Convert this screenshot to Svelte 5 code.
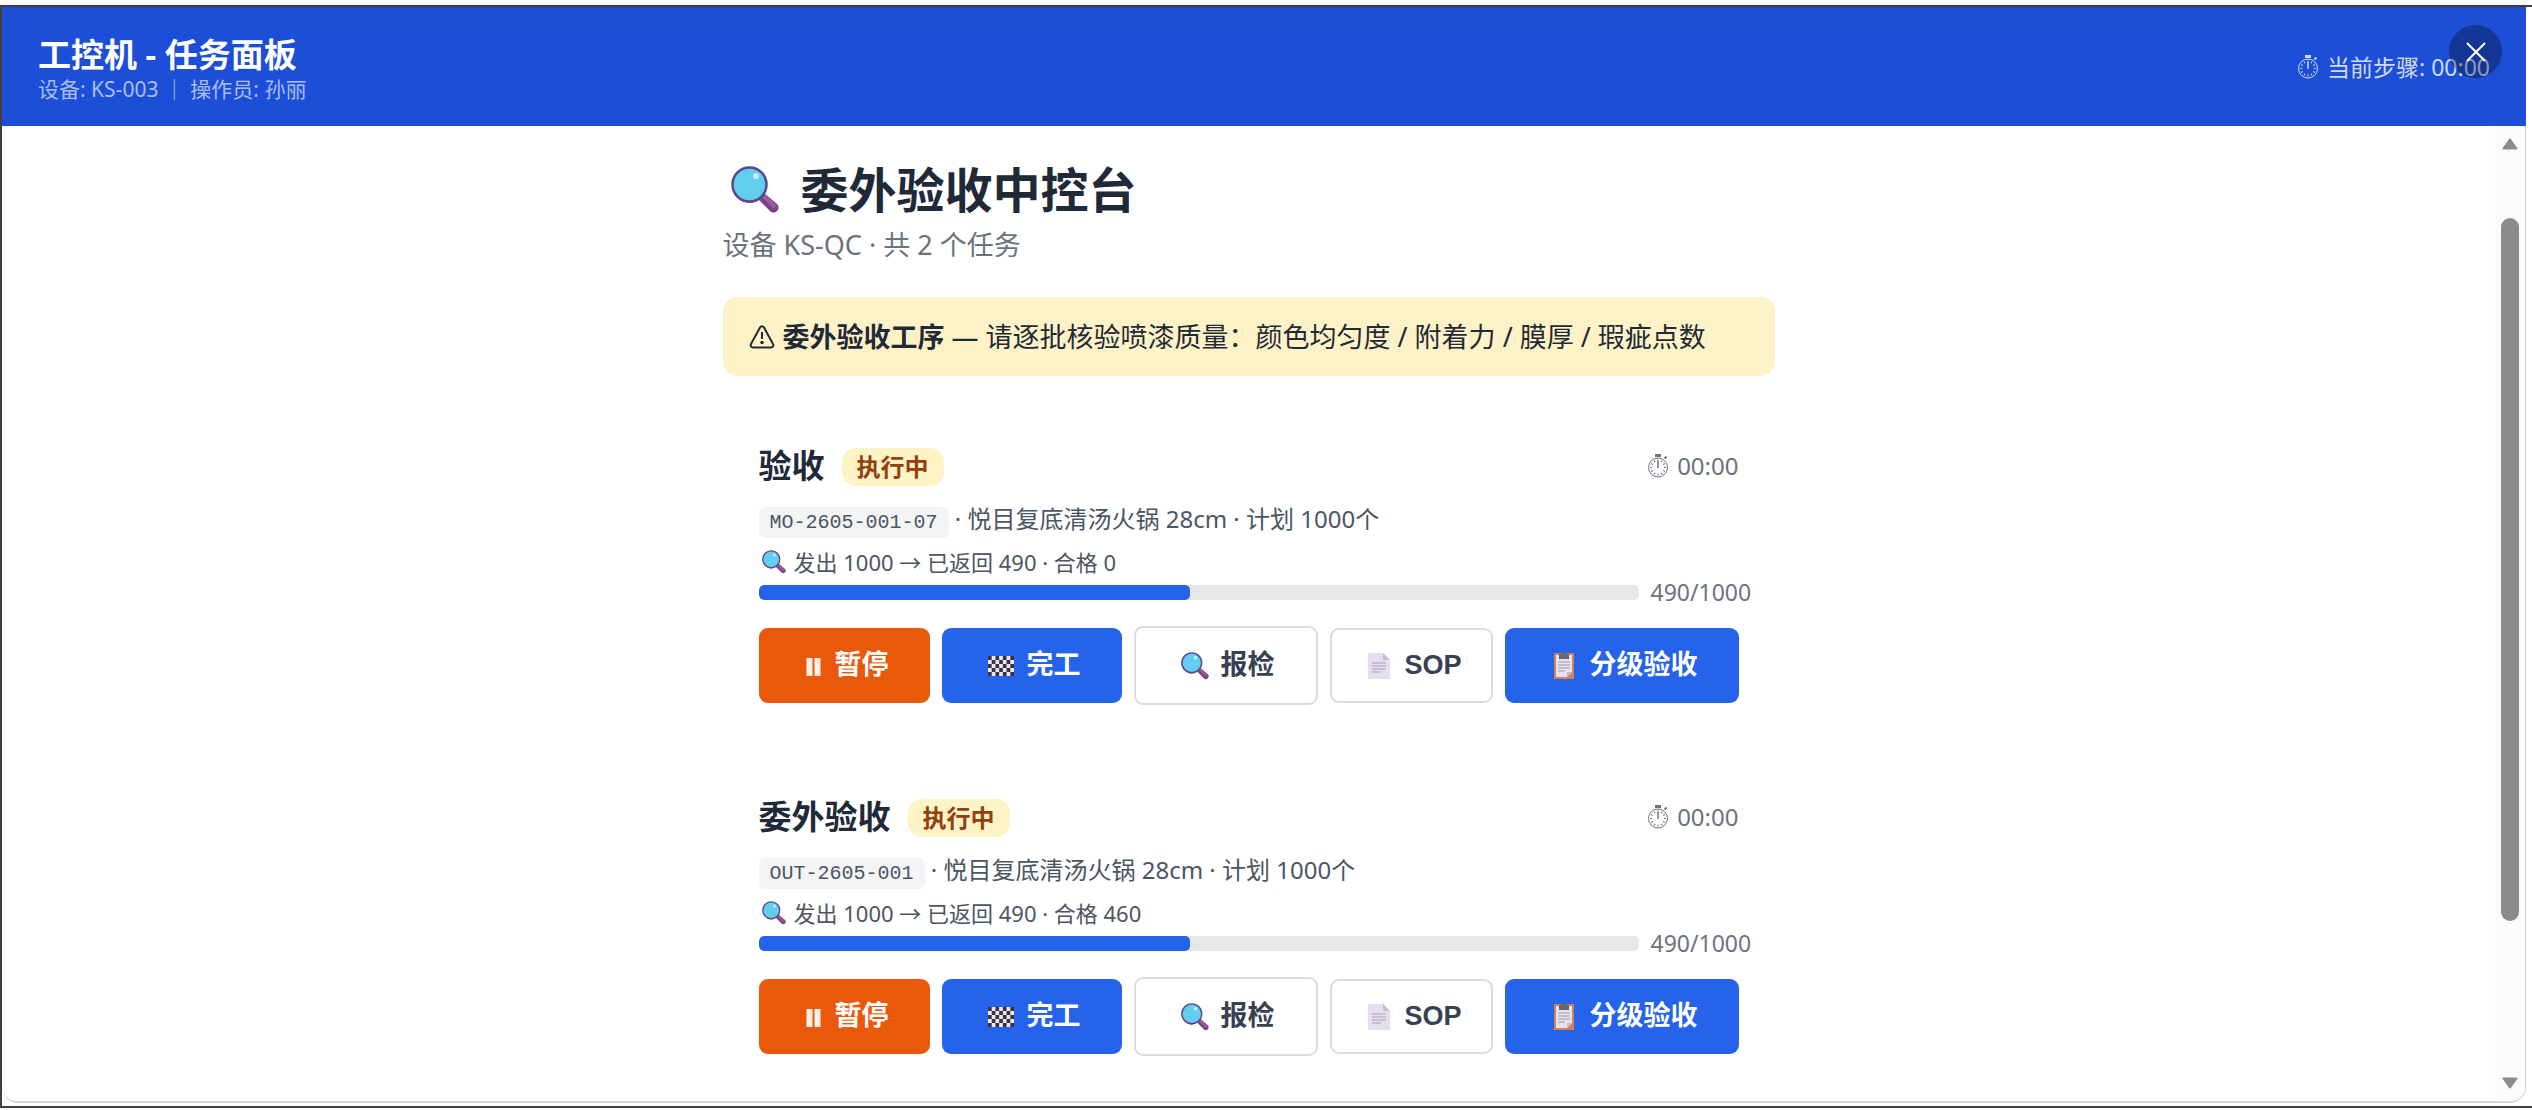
<script>
  const tasks = [
    {
      name: "验收",
      order: "MO-2605-001-07",
      product: "悦目复底清汤火锅 28cm",
      plan: 1000,
      sent: 1000,
      returned: 490,
      passed: 0,
    },
    {
      name: "委外验收",
      order: "OUT-2605-001",
      product: "悦目复底清汤火锅 28cm",
      plan: 1000,
      sent: 1000,
      returned: 490,
      passed: 460,
    },
  ];

  const checks = ["颜色均匀度", "附着力", "膜厚", "瑕疵点数"];
  const ticks = Array.from({ length: 12 }, (_, i) => i * 30);

  // checkered flag cells, 7 x 5
  const cells = Array.from({ length: 35 }, (_, i) => ({ x: i % 7, y: Math.floor(i / 7) }));
</script>

{#snippet magnifier()}
  <svg class="icon" viewBox="0 0 48 48" aria-hidden="true">
    <path d="M28 31l5-4 13 11c2 2 2 5 0 7s-5 2-7 0L28 34z" fill="#7d4484" />
    <path d="M34 31l9 9" stroke="#9a5a9c" stroke-width="4" stroke-linecap="round" />
    <circle cx="18.500" cy="18.500" r="17" fill="#62cdec" stroke="#56478c" stroke-width="2.500" />
    <path d="M5 29a17 17 0 0 0 21 5" fill="none" stroke="#76407c" stroke-width="2" />
    <circle cx="25" cy="10" r="3" fill="#c3f0fb" />
  </svg>
{/snippet}

{#snippet stopwatch()}
  <svg class="watch" viewBox="0 0 22 24" aria-hidden="true">
    <rect x="8" y="0" width="6" height="3" fill="currentColor" />
    <path d="M17.500 4.500l2-2" stroke="currentColor" stroke-width="2" />
    <circle cx="11" cy="13.500" r="9.500" fill="none" stroke="currentColor" />
    {#each ticks as a}
      <path d="M11 5.500v2" stroke="currentColor" transform="rotate({a} 11 13.5)" />
    {/each}
    <path d="M11 7v7" stroke="currentColor" stroke-width="1.500" />
  </svg>
{/snippet}

{#snippet page()}
  <svg class="icon" viewBox="0 0 28 28" aria-hidden="true">
    <path d="M3 1h15l7 7v19H3z" fill="#e6def0" />
    <path d="M18 1l7 7h-7z" fill="#c6bcd0" />
    <path d="M7 11h14M7 14h14M7 17h14M7 20h9" stroke="#a9a0b2" stroke-width="1" />
  </svg>
{/snippet}

{#snippet clipboard()}
  <svg class="icon" viewBox="0 0 28 28" aria-hidden="true">
    <path d="M4 1h20v26H4z" fill="#cf8450" />
    <path d="M6 3h16v17l-5 5H6z" fill="#e9e0f2" />
    <path d="M22 20l-5 5v-5z" fill="#c5b6d2" />
    <path d="M9 3c0-2 2-1 3-2h4c1 1 3 0 3 2v4H9z" fill="#6b6570" />
    <path d="M8 10h12M8 13h12M8 16h12M8 19h7" stroke="#a196ab" />
  </svg>
{/snippet}

<div class="screen">
  <div class="dialog">
    <header class="topbar">
      <div class="title">
        <h1>工控机 - 任务面板</h1>
        <p class="device">设备: KS-003 ｜ 操作员: 孙丽</p>
      </div>
      <div class="step">{@render stopwatch()}<span>当前步骤: 00:00</span></div>
      <button class="close" aria-label="关闭">
        <svg viewBox="0 0 20 20" aria-hidden="true"><path d="M1 1l18 18M19 1L1 19" stroke="#fff" stroke-width="2" /></svg>
      </button>
    </header>

    <div class="body">
      <main>
        <h2>{@render magnifier()}<span>委外验收中控台</span></h2>
        <p class="summary">设备 KS-QC · 共 {tasks.length} 个任务</p>

        <div class="notice">
          <svg viewBox="0 0 26 26" aria-hidden="true">
            <path d="M11 3.500a2.300 2.300 0 0 1 4 0l9 16.500a2.300 2.300 0 0 1-2 3.500H4a2.300 2.300 0 0 1-2-3.500z" fill="none" stroke="currentColor" stroke-width="2" />
            <path d="M13 8v7" stroke="currentColor" stroke-width="2" />
            <circle cx="13" cy="18.500" r="1.800" fill="currentColor" />
          </svg>
          <p><strong>委外验收工序</strong> — 请逐批核验喷漆质量：{checks.join(" / ")}</p>
        </div>

        {#each tasks as task}
          <section class="card">
            <div class="card-head">
              <h3>{task.name}</h3>
              <span class="badge">执行中</span>
              <span class="timer">{@render stopwatch()}<span>00:00</span></span>
            </div>
            <p class="desc"><code>{task.order}</code> · {task.product} · 计划 {task.plan}个</p>
            <p class="qty">
              {@render magnifier()}
              <span>发出 {task.sent} → 已返回 {task.returned} · 合格 {task.passed}</span>
            </p>
            <div class="progress">
              <div class="track">
                <div class="fill" style="width: {(task.returned / task.plan) * 100}%"></div>
              </div>
              <span class="count">{task.returned}/{task.plan}</span>
            </div>
            <div class="actions">
              <button class="pause">
                <svg class="icon narrow" viewBox="0 0 26 28" aria-hidden="true"><path d="M6 6h6v18H6zM14 6h6v18h-6z" fill="#fdeee6" /></svg>
                暂停
              </button>
              <button class="primary">
                <svg class="icon" viewBox="0 0 28 28" aria-hidden="true">
                  <rect x="1" y="4" width="26" height="20" fill="#efe6f5" />
                  {#each cells as c, i}
                    {#if i % 2 === 0}
                      <rect x={1 + c.x * 3.714} y={4 + c.y * 4} width="3.714" height="4" fill="#3b343e" />
                    {/if}
                  {/each}
                </svg>
                完工
              </button>
              <button class="outline">{@render magnifier()}报检</button>
              <button class="outline small">{@render page()}SOP</button>
              <button class="primary">{@render clipboard()}分级验收</button>
            </div>
          </section>
        {/each}
      </main>

      <div class="scrollbar" aria-hidden="true">
        <svg viewBox="0 0 16 12"><path d="M8 1.500L14.500 10.500h-13z" fill="#8b8b8b" stroke="#8b8b8b" stroke-width="2" stroke-linejoin="round" /></svg>
        <div class="thumb"></div>
        <svg viewBox="0 0 16 12"><path d="M8 10.500L1.500 1.500h13z" fill="#8b8b8b" stroke="#8b8b8b" stroke-width="2" stroke-linejoin="round" /></svg>
      </div>
    </div>
  </div>
</div>

<style>
  :global(body) { background: #fff; }
  h1, h2, h3, p { margin: 0; }
  .screen {
    box-sizing: border-box;
    height: 100vh;
    padding-top: 5px;
    padding-bottom: 2px;
    color: #1f2937;
    font-family: "Noto Sans", "Noto Sans CJK SC", sans-serif;
  }
  .dialog {
    box-sizing: border-box;
    height: 100%;
    display: flex;
    flex-direction: column;
    padding-right: 6px;
    padding-bottom: 3px;
    border: 2px solid #404040;
    border-right: 0;
  }
  .topbar {
    position: relative;
    box-sizing: border-box;
    height: 119px;
    flex: none;
    display: flex;
    align-items: center;
    justify-content: space-between;
    padding: 0 36px;
    background: #1d4ed8;
    color: #fff;
  }
  .title { padding-top: 4px; }
  h1 { font-size: 33px; line-height: 40px; }
  .device { font-size: 21px; line-height: 28px; color: #a9bdf1; }
  .step { display: flex; align-items: center; gap: 8px; font-size: 23px; line-height: 32px; color: #cfdaf8; }
  .watch { width: 22px; height: 24px; flex: none; }
  .close {
    position: absolute;
    top: 18px;
    right: 24px;
    width: 53px;
    height: 53px;
    display: grid;
    place-items: center;
    padding: 0;
    border: 0;
    border-radius: 50%;
    background: rgba(0, 0, 0, 0.3);
  }
  .close svg { width: 20px; height: 20px; }

  .body {
    flex: 1;
    min-height: 0;
    display: flex;
    overflow: hidden;
    border-right: 1px solid #d0d0d0;
    border-bottom: 2px solid #d8d8d8;
    border-radius: 0 0 16px 16px;
  }
  main { width: 1052px; margin: 0 auto; padding-top: 36px; }
  h2 { display: flex; align-items: center; gap: 22px; padding-left: 8px; font-size: 48px; line-height: 56px; }
  h2 :global(.icon) { width: 48px; height: 48px; }
  .summary { margin-top: 7px; font-size: 27px; line-height: 40px; color: #6b7280; }
  .notice {
    display: flex;
    align-items: center;
    gap: 8px;
    margin-top: 32px;
    padding: 20px 26px;
    border-radius: 14px;
    background: #fef3c7;
    font-size: 27px;
    line-height: 39px;
  }
  .notice svg { width: 26px; height: 26px; }

  .card { padding: 36px; margin-top: 34px; }
  .card + .card { margin-top: 20px; }
  .card-head { display: flex; align-items: flex-end; height: 40px; }
  h3 { font-size: 33px; line-height: 40px; }
  .badge {
    margin-left: 17px;
    padding: 0 15px;
    border-radius: 14px;
    background: #fef3c7;
    color: #92400e;
    font-size: 24px;
    font-weight: 700;
    line-height: 38px;
  }
  .timer { display: flex; align-items: center; gap: 8px; margin-left: auto; font-size: 24px; line-height: 40px; color: #6b7280; }
  .desc { margin-top: 14px; font-size: 24px; line-height: 38px; color: #4b5563; }
  code {
    padding: 4px 11px;
    border-radius: 6px;
    background: #f3f4f6;
    font-family: "Liberation Mono", monospace;
    font-size: 20px;
  }
  .qty { display: flex; align-items: center; gap: 8px; padding-left: 3px; font-size: 22px; line-height: 40px; color: #4b5563; }
  .icon { width: 36px; height: 28px; flex: none; }
  .qty :global(.icon) { width: 24px; height: 24px; }
  .progress { display: flex; align-items: center; gap: 12px; height: 20px; }
  .track { flex: 1; height: 15px; border-radius: 5px; background: #e5e7eb; overflow: hidden; }
  .fill { height: 100%; border-radius: 5px; background: #2563eb; }
  .count { width: 88px; white-space: nowrap; font-size: 23px; line-height: 20px; color: #6b7280; }
  .actions { display: flex; align-items: center; gap: 12px; margin-top: 24px; }
  .actions button {
    display: flex;
    align-items: center;
    gap: 8px;
    padding: 16px 41px;
    border: 0;
    border-radius: 9px;
    color: #fff;
    font: 700 27px/43px "Liberation Sans", "Noto Sans CJK SC", sans-serif;
    white-space: nowrap;
  }
  .actions .narrow { width: 27px; }
  .actions .pause { background: #ea580c; }
  .actions .primary { background: #2563eb; }
  .actions .outline { border: 2px solid #d9dce1; background: #fff; color: #374151; }
  .actions .small { padding: 14px 29px; }

  .scrollbar {
    box-sizing: border-box;
    width: 30px;
    display: flex;
    flex-direction: column;
    align-items: center;
    justify-content: space-between;
    padding: 12px 0;
    background: #fbfbfb;
  }
  .scrollbar svg { width: 16px; height: 12px; }
  .thumb { width: 18px; height: 74%; margin-bottom: 88px; border-radius: 9px; background: #8b8b8b; }
</style>
